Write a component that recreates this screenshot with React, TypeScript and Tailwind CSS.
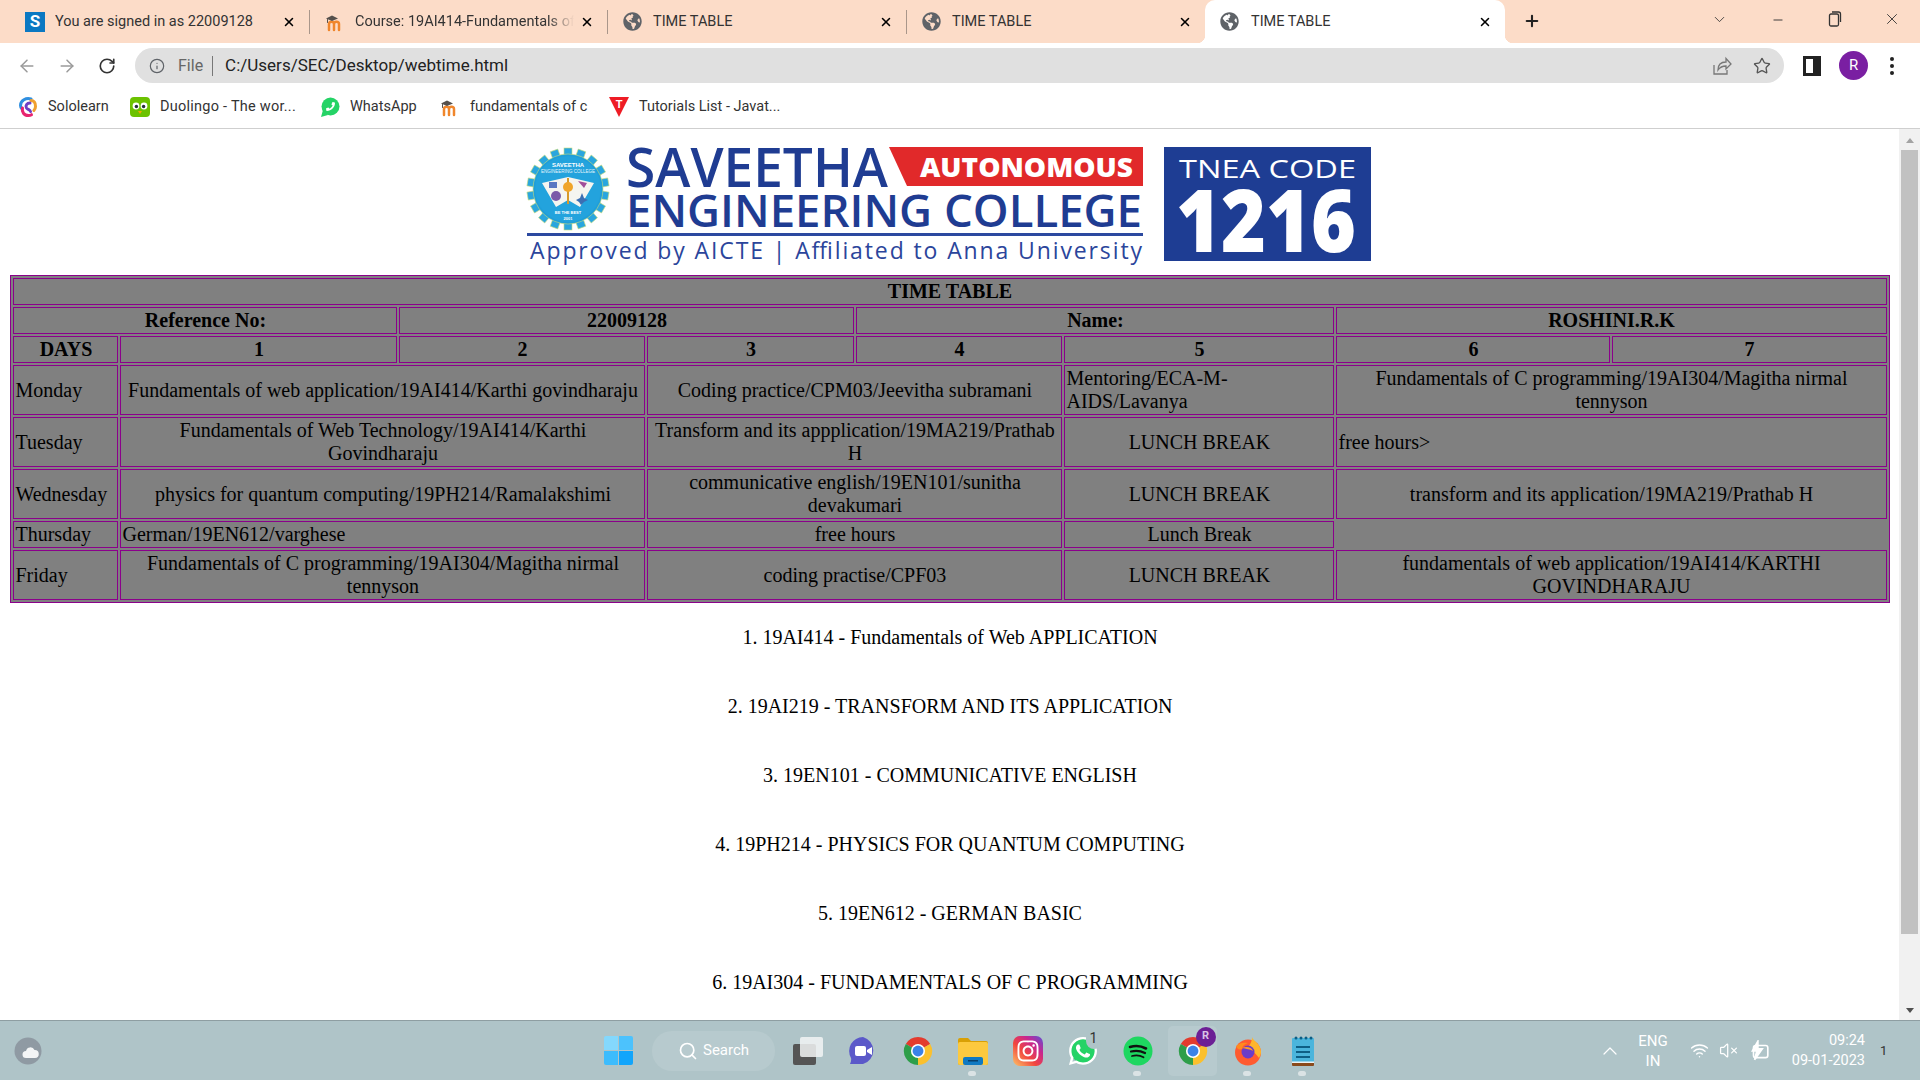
import { ArrowLeft, ArrowRight, ChevronDown, ChevronUp, Info, Minus, Plus, RotateCw, Search, Star, VolumeX, Wifi, X } from 'lucide-react';
import { FaGlobeAmericas, FaInstagram, FaPhoneAlt, FaWhatsapp } from 'react-icons/fa';
import clsx from 'clsx';
import type { ReactNode } from 'react';

function SoloIcon() {
  return (
    <svg viewBox="0 0 20 20" className="h-5 w-5 shrink-0" fill="none" strokeWidth={3} strokeLinecap="round">
      <path d="M13 2C8 0.500 2.500 3.500 2.500 8.500c0 1.500 0.600 2.600 1.500 3.500" stroke="#2f8fe0" />
      <path d="M4.500 11c-1 4 1.500 7.500 6 7.500 1 0 2-.2 3-.8" stroke="#e8246f" />
      <path d="M13 3.500c3 0 4.500 2.500 4.500 6 0 1.500-.6 3-1.600 4" stroke="#f0a030" />
      <path d="M12 6C9 6 7 8.500 8.500 11c1 1.500 3.500 1.500 4 3.500" stroke="#6c3fc5" />
    </svg>
  );
}

function DuoIcon() {
  return (
    <svg viewBox="0 0 20 20" className="h-5 w-5 shrink-0">
      <rect width="20" height="20" rx="4" fill="#6cc200" />
      <circle cx="6" cy="9" r="3.400" fill="#fff" />
      <circle cx="14" cy="9" r="3.400" fill="#fff" />
      <circle cx="6.400" cy="9.500" r="1.700" fill="#23303a" />
      <circle cx="13.600" cy="9.500" r="1.700" fill="#23303a" />
      <path d="M8 14h4l-2 3z" fill="#f5a800" />
    </svg>
  );
}

function WhatsAppBookmark() {
  return (
    <span className="relative flex h-5 w-5 shrink-0 items-center justify-center">
      <svg viewBox="0 0 20 20" className="absolute inset-0 h-5 w-5">
        <circle cx="10.500" cy="9.500" r="9" fill="#25d366" />
        <path d="M1 20l2-7 5 5z" fill="#25d366" />
      </svg>
      <FaPhoneAlt size={9} className="relative -scale-x-100 text-white" />
    </span>
  );
}

function MoodleIcon() {
  return (
    <svg viewBox="0 0 20 20" className="h-5 w-5 shrink-0" fill="none" strokeLinecap="round">
      <path d="M4 18v-6c0-3 5-3 5 0v6M9 12c0-3 5-3 5 0v6" stroke="#f0862c" strokeWidth={2.500} />
      <path d="M1 6.500l6-3 6 3-6 2.500z" fill="#55504c" />
      <path d="M2.500 7.500v3" stroke="#55504c" strokeWidth={1} />
    </svg>
  );
}

function TutorialIcon() {
  return (
    <svg viewBox="0 0 22 22" className="h-[22px] w-[22px] shrink-0">
      <path d="M1 1h20L11 21z" fill="#ee1c25" />
      <text x="11" y="12" textAnchor="middle" fontSize="11" fontWeight="700" fill="#fff" fontFamily="Liberation Sans, sans-serif">T</text>
    </svg>
  );
}

function ChromeIcon() {
  return (
    <svg viewBox="0 0 32 32" className="h-[30px] w-[30px]">
      <path d="M16 16L3 8.500A15 15 0 0 1 29 8.500Z" fill="#e33b2e" />
      <path d="M16 16L29 8.500A15 15 0 0 1 16 31Z" fill="#fbc02d" />
      <path d="M16 16L16 31A15 15 0 0 1 3 8.500Z" fill="#2e9e49" />
      <circle cx="16" cy="16" r="7.500" fill="#fff" />
      <circle cx="16" cy="16" r="5.800" fill="#3b82e8" />
    </svg>
  );
}

function Gear() {
  const bolts = Array.from({ length: 18 }, (_, i) => i * 20);
  return (
    <g>
      {bolts.map((deg) => (
        <rect key={deg} x="44" y="8" width="8" height="9" fill="#2aa6de" stroke="#c9dc7a" strokeWidth="0.600" transform={`rotate(${deg} 48 49)`} />
      ))}
      <circle cx="48" cy="49" r="35" fill="#1f9ed9" stroke="#c9dc7a" strokeWidth="0.600" />
      <circle cx="48" cy="49" r="33" fill="#23a3dd" />
      <text x="48" y="27" textAnchor="middle" fontSize="6" fontWeight="700" fill="#fff" fontFamily="Liberation Sans, sans-serif">SAVEETHA</text>
      <text x="48" y="33" textAnchor="middle" fontSize="4.500" fill="#e6f5fb" fontFamily="Liberation Sans, sans-serif">ENGINEERING COLLEGE</text>
      <path d="M22 43l26-6 26 6-14 24-12-7-12 7z" fill="#f5f5f0" />
      <path d="M48 38v26" stroke="#d79a2b" strokeWidth="2" />
      <circle cx="48" cy="47" r="5" fill="#f0a52a" />
      <rect x="29" y="42" width="8" height="6" fill="#5a78c2" />
      <circle cx="36" cy="56" r="5" fill="#7b5aa8" />
      <path d="M58 41l9 2-3 5z" fill="#a24f9a" />
      <path d="M62 53l2 5 4 2-4 2-3 3-2-3-3-2 4-2z" fill="#3b6fb3" />
      <text x="48" y="74" textAnchor="middle" fontSize="4" fontWeight="700" fill="#fff" fontFamily="Liberation Sans, sans-serif">BE THE BEST</text>
      <text x="48" y="80" textAnchor="middle" fontSize="4" fontWeight="700" fill="#fff" fontFamily="Liberation Sans, sans-serif">2001</text>
    </g>
  );
}

function CollegeLogo() {
  return (
    <svg viewBox="0 0 860 135" className="mb-[5px] h-[135px] w-[860px] shrink-0" fontFamily="Open Sans, sans-serif">
      <g transform="translate(0 5)">
        <Gear />
      </g>
      <text x="106" y="52" fontSize="54" fontWeight="600" fill="#1f3c92" textLength="262" lengthAdjust="spacingAndGlyphs">SAVEETHA</text>
      <path d="M369 12H623V51H387Z" fill="#e1292a" />
      <text x="400" y="42" fontSize="26" fontWeight="800" fill="#fff" textLength="213" lengthAdjust="spacingAndGlyphs">AUTONOMOUS</text>
      <text x="106" y="92" fontSize="46" fontWeight="600" fill="#1f3c92" textLength="516" lengthAdjust="spacingAndGlyphs">ENGINEERING COLLEGE</text>
      <rect x="7" y="98" width="616" height="3" fill="#2c49a0" />
      <text x="10" y="124" fontSize="23" fontWeight="500" fill="#2b459b" textLength="612" lengthAdjust="spacing">Approved by AICTE | Affiliated to Anna University</text>
      <rect x="644" y="12" width="207" height="114" fill="#1e3d93" />
      <text x="659" y="43" fontSize="25" fontWeight="500" fill="#fff" textLength="177" lengthAdjust="spacingAndGlyphs">TNEA CODE</text>
      <text x="656" y="117" fontSize="86" fontWeight="800" fill="#fff" textLength="180" lengthAdjust="spacingAndGlyphs">1216</text>
    </svg>
  );
}

interface TabProps {
  icon: ReactNode;
  title: string;
  width: string;
  divider?: boolean;
  fade?: boolean;
}

function Tab({ icon, title, width, divider = true, fade }: TabProps) {
  return (
    <div className={clsx('flex h-full shrink-0 items-center pl-[15px]', width, !divider && 'pr-[13px]')}>
      <span className="flex w-[30px] shrink-0 items-center">{icon}</span>
      <span
        className={clsx(
          'min-w-0 flex-1 overflow-hidden whitespace-nowrap text-[#333]',
          fade && '[mask-image:linear-gradient(to_right,#000_88%,transparent)]'
        )}
      >
        {title}
      </span>
      <X size={14} strokeWidth={2.600} className="ml-[6px] shrink-0 text-black" />
      {divider && <span className="ml-[13px] h-[24px] w-px shrink-0 bg-[#a9968a]" />}
    </div>
  );
}

function Globe() {
  return <FaGlobeAmericas size={19} className="text-[#5f6368]" />;
}

function BrowserChrome() {
  return (
    <header className="shrink-0 bg-white font-['Roboto',sans-serif] text-[14.5px]">
      <div className="flex h-[43px] bg-[#fcdcc8]">
        <div className="w-[10px] shrink-0" />
        <Tab
          width="w-[300px]"
          title="You are signed in as 22009128"
          icon={<span className="flex h-5 w-5 items-center justify-center bg-[#0a78c2] text-[17px] font-bold leading-none text-white">S</span>}
        />
        <Tab width="w-[298px]" title="Course: 19AI414-Fundamentals of Web" fade icon={<MoodleIcon />} />
        <Tab width="w-[299px]" title="TIME TABLE" icon={<Globe />} />
        <Tab width="w-[298px]" title="TIME TABLE" divider={false} icon={<Globe />} />
        <div className="relative flex h-full w-[300px] shrink-0 items-center rounded-t-[10px] bg-white pl-[15px] pr-[13px]">
          <span className="absolute bottom-0 left-[-8px] h-2 w-2 bg-[radial-gradient(circle_at_0_0,#fcdcc8_8px,#fff_8.5px)]" />
          <span className="absolute bottom-0 right-[-8px] h-2 w-2 bg-[radial-gradient(circle_at_100%_0,#fcdcc8_8px,#fff_8.5px)]" />
          <span className="flex w-[31px] shrink-0 items-center"><Globe /></span>
          <span className="flex-1 text-[#333]">TIME TABLE</span>
          <X size={14} strokeWidth={2.600} className="text-black" />
        </div>
        <Plus size={18} strokeWidth={2.800} className="ml-[18px] mt-[12px] shrink-0 text-[#222]" />
        <div className="flex flex-1 items-start pt-[11px] text-[#333]">
          <ChevronDown size={17} strokeWidth={1.200} className="ml-[170px]" />
          <Minus size={14} strokeWidth={1.600} className="ml-[43px] mt-[2px]" />
          <svg viewBox="0 0 14 16" className="ml-[43px] h-[16px] w-[14px]" fill="none" stroke="#333" strokeWidth="1.300">
            <rect x="1.500" y="3" width="9" height="12" rx="1.500" />
            <path d="M4 1h6.500a2 2 0 0 1 2 2v8" />
          </svg>
          <X size={18} strokeWidth={1.200} className="ml-[41px] mt-[-1px]" />
        </div>
      </div>

      <div className="flex h-[52px] items-center pb-[7px] pl-[7px]">
        <ArrowLeft size={20} strokeWidth={1.800} className="mx-[10px] text-[#9a9a9a]" />
        <ArrowRight size={20} strokeWidth={1.800} className="mx-[10px] text-[#9a9a9a]" />
        <RotateCw size={18} strokeWidth={2.200} className="mx-[11px] text-[#333]" />
        <div className="ml-[8px] flex h-[35px] w-[1649px] shrink-0 items-center rounded-full bg-[#e0e0e0] pl-[14px] pr-[14px]">
          <Info size={16} strokeWidth={1.800} className="text-[#5f6368]" />
          <span className="ml-[13px] text-[16px] text-[#666]">File</span>
          <span className="ml-[9px] h-[20px] w-px bg-[#777]" />
          <span className="ml-[12px] flex-1 text-[17px] text-[#222]">C:/Users/SEC/Desktop/webtime.html</span>
          <svg viewBox="0 0 20 20" className="h-5 w-5 text-[#777]" fill="none" stroke="currentColor" strokeWidth="1.300">
            <path d="M2 9v9h13v-4" />
            <path d="M6 14c0-5 3-8 8-8V2.500l5 5.500-5 5V10c-4 0-6 1-8 4z" />
          </svg>
          <Star size={18} strokeWidth={1.800} className="ml-[21px] mr-[-1px] text-[#555]" />
        </div>
        <svg viewBox="0 0 18 20" className="ml-[19px] h-[20px] w-[18px]">
          <rect x="0" y="0" width="18" height="20" fill="#222" />
          <rect x="3" y="3" width="7" height="14" fill="#fff" />
        </svg>
        <span className="ml-[18px] flex h-[29px] w-[29px] items-center justify-center rounded-full bg-[#7a1fa2] text-[15px] text-white">R</span>
        <span className="ml-[22px] flex flex-col gap-[3px]">
          <i className="h-[4px] w-[4px] rounded-full bg-[#222]" />
          <i className="h-[4px] w-[4px] rounded-full bg-[#222]" />
          <i className="h-[4px] w-[4px] rounded-full bg-[#222]" />
        </span>
      </div>

      <div className="flex h-[34px] items-start border-b border-[#cfcfcf] pl-[18px] pt-[1px] text-[#333]">
        <div className="flex w-[112px] shrink-0 items-center gap-[10px]"><SoloIcon />Sololearn</div>
        <div className="flex w-[190px] shrink-0 items-center gap-[10px] tracking-[0.25px]"><DuoIcon />Duolingo - The wor...</div>
        <div className="flex w-[120px] shrink-0 items-center gap-[10px]"><WhatsAppBookmark />WhatsApp</div>
        <div className="flex w-[168px] shrink-0 items-center gap-[10px]"><MoodleIcon />fundamentals of c</div>
        <div className="flex shrink-0 items-center gap-[9px]"><TutorialIcon />Tutorials List - Javat...</div>
      </div>
    </header>
  );
}

const cell = 'border border-[#8b008b] p-px';
const center = `${cell} text-center font-normal`;
const head = `${cell} text-center font-bold`;

function TimeTable() {
  return (
    <table className="w-[1879px] shrink-0 table-fixed border-separate border-spacing-[2px] border border-[#8b008b] bg-[#808080] text-black">
      <colgroup>
        <col className="w-[105px]" />
        <col className="w-[277px]" />
        <col className="w-[246px]" />
        <col className="w-[207px]" />
        <col className="w-[206px]" />
        <col className="w-[270px]" />
        <col className="w-[274px]" />
        <col className="w-[274px]" />
      </colgroup>
      <tbody>
        <tr>
          <th colSpan={8} className={head}>TIME TABLE</th>
        </tr>
        <tr>
          <th colSpan={2} className={head}>Reference No:</th>
          <th colSpan={2} className={head}>22009128</th>
          <th colSpan={2} className={head}>Name:</th>
          <th colSpan={2} className={head}>ROSHINI.R.K</th>
        </tr>
        <tr>
          <th className={head}>DAYS</th>
          <th className={head}>1</th>
          <th className={head}>2</th>
          <th className={head}>3</th>
          <th className={head}>4</th>
          <th className={head}>5</th>
          <th className={head}>6</th>
          <th className={head}>7</th>
        </tr>
        <tr>
          <td className={cell}>Monday</td>
          <td colSpan={2} className={center}>Fundamentals of web application/19AI414/Karthi govindharaju</td>
          <td colSpan={2} className={center}>Coding practice/CPM03/Jeevitha subramani</td>
          <td className={cell}>Mentoring/ECA-M-AIDS/Lavanya</td>
          <td colSpan={2} className={center}>Fundamentals of C programming/19AI304/Magitha nirmal tennyson</td>
        </tr>
        <tr>
          <td className={cell}>Tuesday</td>
          <td colSpan={2} className={center}>Fundamentals of Web Technology/19AI414/Karthi Govindharaju</td>
          <td colSpan={2} className={center}>Transform and its appplication/19MA219/Prathab H</td>
          <td className={center}>LUNCH BREAK</td>
          <td colSpan={2} className={cell}>free hours&gt;</td>
        </tr>
        <tr>
          <td className={cell}>Wednesday</td>
          <td colSpan={2} className={center}>physics for quantum computing/19PH214/Ramalakshimi</td>
          <td colSpan={2} className={center}>communicative english/19EN101/sunitha devakumari</td>
          <td className={center}>LUNCH BREAK</td>
          <td colSpan={2} className={center}>transform and its application/19MA219/Prathab H</td>
        </tr>
        <tr>
          <td className={cell}>Thursday</td>
          <td colSpan={2} className={cell}>German/19EN612/varghese</td>
          <td colSpan={2} className={center}>free hours</td>
          <td className={center}>Lunch Break</td>
        </tr>
        <tr>
          <td className={cell}>Friday</td>
          <td colSpan={2} className={center}>Fundamentals of C programming/19AI304/Magitha nirmal tennyson</td>
          <td colSpan={2} className={center}>coding practise/CPF03</td>
          <td className={center}>LUNCH BREAK</td>
          <td colSpan={2} className={center}>fundamentals of web application/19AI414/KARTHI GOVINDHARAJU</td>
        </tr>
      </tbody>
    </table>
  );
}

const subjects = [
  '1. 19AI414 - Fundamentals of Web APPLICATION',
  '2. 19AI219 - TRANSFORM AND ITS APPLICATION',
  '3. 19EN101 - COMMUNICATIVE ENGLISH',
  '4. 19PH214 - PHYSICS FOR QUANTUM COMPUTING',
  '5. 19EN612 - GERMAN BASIC',
  '6. 19AI304 - FUNDAMENTALS OF C PROGRAMMING',
];

function Scrollbar() {
  return (
    <div className="flex w-[21px] shrink-0 flex-col items-center bg-[#f1f1f1]">
      <span className="mt-[9px] h-0 w-0 border-x-[4px] border-b-[5px] border-x-transparent border-b-[#a3a3a3]" />
      <span className="mt-[7px] h-[784px] w-[17px] bg-[#c1c1c1]" />
      <span className="mt-[74px] h-0 w-0 border-x-[4px] border-t-[5px] border-x-transparent border-t-[#505050]" />
    </div>
  );
}

function Slot({ children, dot, active }: { children: ReactNode; dot?: boolean; active?: boolean }) {
  return (
    <div className="relative flex h-[60px] w-[55px] shrink-0 items-center justify-center">
      {active && <span className="absolute inset-x-[3px] inset-y-[5px] rounded-[5px] bg-white/10" />}
      <span className="relative flex items-center justify-center">{children}</span>
      {dot && <span className="absolute bottom-[5px] left-[23px] h-[5px] w-[8px] rounded-full bg-[#dbe3e5]" />}
    </div>
  );
}

function Taskbar() {
  return (
    <footer className="flex h-[60px] shrink-0 items-center border-t border-[#8e9ea2] bg-[#afc4c8] font-['Roboto',sans-serif] text-white">
      <svg viewBox="0 0 30 30" className="ml-[13px] h-[30px] w-[30px] shrink-0">
        <circle cx="15" cy="15" r="13.500" fill="#8f9aa3" />
        <path d="M13 22a3.500 3.500 0 0 1 0-7 4.500 4.500 0 0 1 8.500-1 4 4 0 0 1 .5 8z" fill="#f3f5f6" />
      </svg>

      <div className="ml-[561px] grid h-[29px] w-[29px] shrink-0 grid-cols-2 gap-px">
        <i className="rounded-tl-[2px] bg-[#84d8fd]" />
        <i className="rounded-tr-[2px] bg-[#4cc2fd]" />
        <i className="rounded-bl-[2px] bg-[#3dbcfd]" />
        <i className="rounded-br-[2px] bg-[#12a5fb]" />
      </div>

      <div className="ml-[19px] flex h-[40px] w-[123px] shrink-0 items-center rounded-full bg-white/10 pl-[28px] text-[15px]">
        <Search size={20} strokeWidth={2} className="ml-[-2px] mr-[-1px]" />
        <span className="ml-[6px]">Search</span>
      </div>

      <div className="ml-[5px] flex">
        <Slot>
          <svg viewBox="0 0 30 28" className="h-[28px] w-[30px]">
            <rect x="0" y="7" width="23" height="21" rx="2" fill="#555" />
            <rect x="7" y="0" width="23" height="20" rx="2" fill="#f2f4f4" fillOpacity="0.850" />
          </svg>
        </Slot>
        <Slot>
          <svg viewBox="0 0 30 30" className="h-[30px] w-[30px]">
            <path d="M15 1a14 14 0 0 1 0 27H2c1-2 1.500-4 1-6A14 14 0 0 1 15 1z" fill="#5b59c9" />
            <rect x="7" y="10" width="11" height="10" rx="2" fill="#fff" />
            <path d="M19 14l5-3v8l-5-3z" fill="#fff" />
          </svg>
        </Slot>
        <Slot><ChromeIcon /></Slot>
        <Slot dot>
          <svg viewBox="0 0 30 28" className="h-[28px] w-[30px]">
            <path d="M0 3a2 2 0 0 1 2-2h8l3 3h15a2 2 0 0 1 2 2v20a2 2 0 0 1-2 2H2a2 2 0 0 1-2-2z" fill="#d9a005" />
            <rect x="0" y="5" width="30" height="23" rx="2" fill="#fcc93f" />
            <rect x="5" y="20" width="20" height="8" rx="2" fill="#0f79c2" />
            <rect x="10" y="23" width="10" height="1.500" fill="#073f6b" />
          </svg>
        </Slot>
        <Slot>
          <span className="flex h-[30px] w-[30px] items-center justify-center rounded-[7px] bg-[linear-gradient(to_top_right,#fdc468,#f2473e_40%,#c9268f_70%,#5b51d8)]">
            <FaInstagram size={24} className="text-white" />
          </span>
        </Slot>
        <Slot>
          <span className="relative flex h-[32px] w-[32px] items-center justify-center">
            <span className="absolute h-[24px] w-[24px] rounded-full bg-[#25d366]" />
            <FaWhatsapp size={32} className="relative text-white" />
            <span className="absolute right-[-3px] top-[-6px] flex h-[20px] w-[16px] items-center justify-center rounded-full bg-[#afc4c8] text-[14px] text-[#333]">1</span>
          </span>
        </Slot>
        <Slot dot>
          <svg viewBox="0 0 30 30" className="h-[30px] w-[30px]" fill="none" stroke="#111" strokeLinecap="round">
            <circle cx="15" cy="15" r="14.500" fill="#1ed760" stroke="none" />
            <path d="M7 11c5-1.500 11-1.200 16 1.500" strokeWidth="2.600" />
            <path d="M8 15.500c4.500-1.200 9.500-.8 14 1.500" strokeWidth="2.200" />
            <path d="M9 20c4-1 8-.7 11.500 1.200" strokeWidth="1.800" />
          </svg>
        </Slot>
        <Slot active>
          <ChromeIcon />
          <span className="absolute right-[-8px] top-[-9px] flex h-[20px] w-[20px] items-center justify-center rounded-full bg-[#6c1f95] text-[11px] font-bold text-[#d9c4e6]">R</span>
        </Slot>
        <Slot dot>
          <svg viewBox="0 0 30 30" className="h-[30px] w-[30px]">
            <circle cx="15" cy="16.500" r="13" fill="#ff5b30" />
            <path d="M19 1c1 4 8 6 9 14 .4 3-1 5-2 7-4-6-8-8-13-9 3-3 6-6 6-12z" fill="#ffb52b" />
            <path d="M3 10c3-3 7-4 12-3-3 1-6 3-6 6-3 1-5 0-6-3z" fill="#ff8a1f" />
            <circle cx="15" cy="16" r="6.500" fill="#6b3cc9" />
            <path d="M9 12c4-2 10-1 11 3-3-2-7-2-11-3z" fill="#ff9a26" />
          </svg>
        </Slot>
        <Slot dot>
          <svg viewBox="0 0 22 30" className="h-[30px] w-[22px]">
            <rect x="0" y="2" width="22" height="26" rx="1" fill="#4bb5dc" />
            <rect x="0" y="26" width="22" height="4" rx="1" fill="#8a4a1c" />
            <rect x="0" y="25.500" width="22" height="1.500" fill="#e9f3f6" />
            <circle cx="4" cy="2" r="1.500" fill="#0e5f85" />
            <circle cx="9" cy="2" r="1.500" fill="#0e5f85" />
            <circle cx="14" cy="2" r="1.500" fill="#0e5f85" />
            <circle cx="19" cy="2" r="1.500" fill="#0e5f85" />
            <rect x="4" y="10" width="14" height="2" fill="#0e5f85" />
            <rect x="4" y="15" width="14" height="2" fill="#0e5f85" />
            <rect x="4" y="20" width="14" height="2" fill="#0e5f85" />
          </svg>
        </Slot>
      </div>

      <ChevronUp size={24} strokeWidth={1.200} className="ml-[268px] shrink-0" />
      <div className="ml-[11px] flex w-[40px] shrink-0 flex-col items-center text-[15px] leading-[20px]">
        <span>ENG</span>
        <span>IN</span>
      </div>
      <Wifi size={19} strokeWidth={1.800} className="ml-[17px] shrink-0" />
      <VolumeX size={19} strokeWidth={1.600} className="ml-[10px] shrink-0" />
      <svg viewBox="0 0 20 20" className="ml-[10px] h-[22px] w-[22px] shrink-0" fill="none" stroke="#fff" strokeWidth="1.500">
        <rect x="5" y="5" width="13" height="11" rx="2" />
        <path d="M9 1L4 10h4l-2 8 7-10H9z" fill="#fff" />
      </svg>
      <div className="ml-[5px] flex w-[90px] shrink-0 flex-col items-end text-[14.5px] leading-[20px]">
        <span>09:24</span>
        <span>09-01-2023</span>
      </div>
      <span className="ml-[15px] text-[13px] text-[#333]">1</span>
    </footer>
  );
}

export default function App() {
  return (
    <div className="flex h-screen w-screen flex-col overflow-hidden bg-white">
      <BrowserChrome />
      <div className="flex min-h-0 flex-1">
        <main className="flex min-w-0 flex-1 flex-col items-center overflow-hidden pl-px font-['Liberation_Serif',serif] text-[20px] leading-[23px] text-black">
          <div className="h-[6px] w-full shrink-0" />
          <CollegeLogo />
          <TimeTable />
          <div className="mt-[23px] flex flex-col items-center gap-[46px]">
            {subjects.map((s) => (
              <p key={s}>{s}</p>
            ))}
          </div>
        </main>
        <Scrollbar />
      </div>
      <Taskbar />
    </div>
  );
}
